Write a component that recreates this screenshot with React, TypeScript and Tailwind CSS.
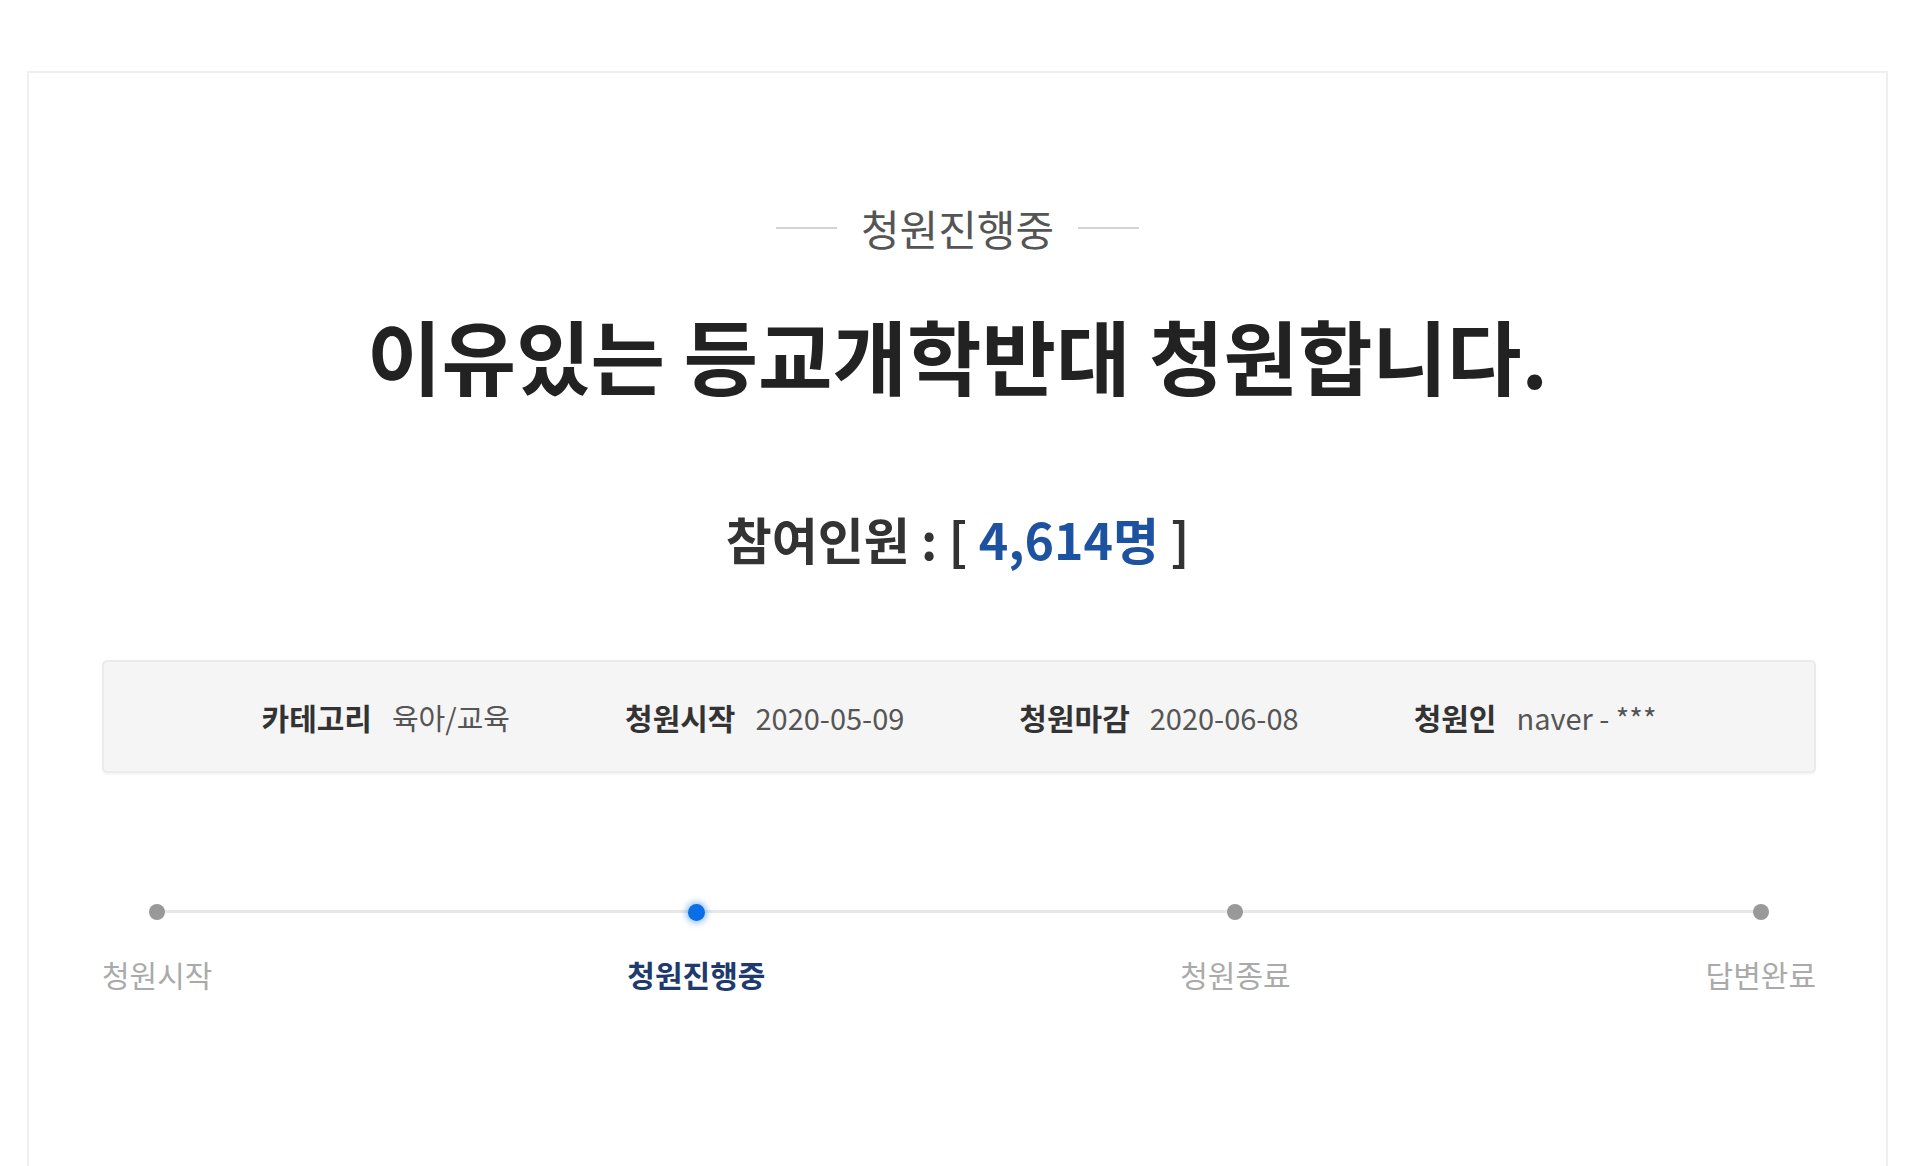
import React from 'react'

const FONT = { fontFamily: '"Noto Sans CJK KR", "Noto Sans", sans-serif' }

const info = [
    { label: '카테고리', value: '육아/교육' },
    { label: '청원시작', value: '2020-05-09' },
    { label: '청원마감', value: '2020-06-08' },
    { label: '청원인', value: 'naver - ***' },
]

const steps = [
    { label: '청원시작', active: false },
    { label: '청원진행중', active: true },
    { label: '청원종료', active: false },
    { label: '답변완료', active: false },
]

export default function App() {
    return (
        <div className="min-h-[1166px] bg-white pt-[71px] pl-[27px] overflow-hidden" style={FONT}>
            <div className="w-[1861px] min-h-[1095px] border-t-2 border-l-2 border-r-2 border-[#efefef] bg-white pt-[130px]">
                {/* status label */}
                <div className="flex items-center justify-center gap-[24px]">
                    <span className="h-[2px] w-[61px] bg-[#d4d4d4]" />
                    <span className="text-[42px] leading-[50px] text-[#555]">청원진행중</span>
                    <span className="h-[2px] w-[61px] bg-[#d4d4d4]" />
                </div>

                <h1 className="mt-[52px] text-center text-[81px] leading-[97px] font-bold text-[#222]">
                    이유있는 등교개학반대 청원합니다.
                </h1>

                <p className="mt-[106px] text-center text-[50px] leading-[60px] font-bold text-[#333]">
                    참여인원 : [ <span className="text-[#1c52a0]">4,614</span>
                    <span className="text-[#1c52a0]">명</span> ]
                </p>

                {/* info box */}
                <div className="mt-[92px] ml-[73px] w-[1714px] h-[113px] rounded-[5px] border-2 border-[#ebebeb] bg-[#f5f5f5] shadow-[0_2px_2px_rgba(0,0,0,0.04)] flex items-center justify-center gap-[115px]">
                    {info.map(item => (
                        <div key={item.label} className="flex items-center gap-[20px] leading-[36px]">
                            <span className="text-[30px] font-bold text-[#333]">{item.label}</span>
                            <span className="text-[29px] text-[#555]">{item.value}</span>
                        </div>
                    ))}
                </div>

                {/* progress */}
                <div className="relative mt-[131px] ml-[73px] w-[1714px] flex justify-between">
                    <div className="absolute top-[6px] left-[53px] right-[59px] h-[3px] bg-[#e8e8e8]" />
                    {steps.map(step => (
                        <div key={step.label} className="relative flex flex-col items-center">
                            <span
                                className={
                                    step.active
                                        ? 'h-[17px] w-[17px] rounded-full bg-[#0a6ee6] shadow-[0_0_6px_2px_rgba(10,110,230,0.45)]'
                                        : 'h-[16px] w-[16px] rounded-full bg-[#999]'
                                }
                            />
                            <span
                                className={
                                    step.active
                                        ? 'mt-[35px] text-[30px] leading-[36px] font-bold text-[#1e3a6e]'
                                        : 'mt-[36px] text-[30px] leading-[36px] text-[#aaa]'
                                }
                            >
                                {step.label}
                            </span>
                        </div>
                    ))}
                </div>
            </div>
        </div>
    )
}
